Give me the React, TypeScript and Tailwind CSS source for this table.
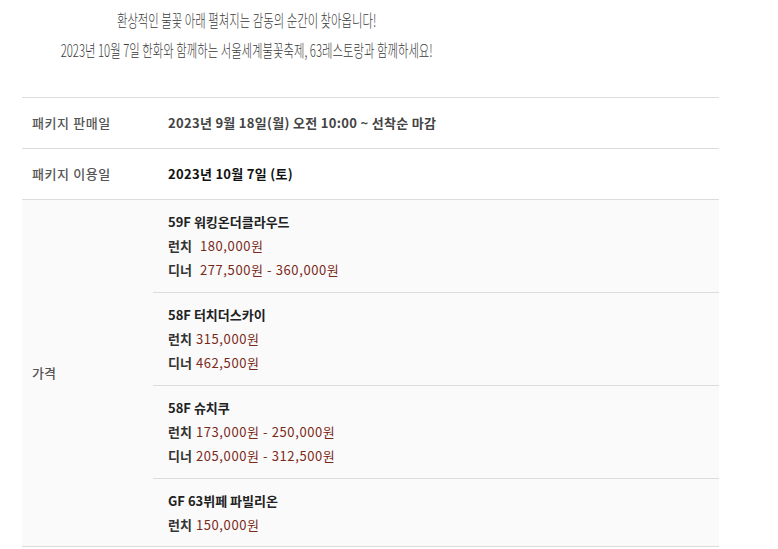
type Price = { label: string; value: string; gap?: boolean };
type Venue = { name: string; prices: Price[] };

const VENUES: Venue[] = [
  {
    name: "59F 워킹온더클라우드",
    prices: [
      { label: "런치", value: "180,000원", gap: true },
      { label: "디너", value: "277,500원 - 360,000원", gap: true },
    ],
  },
  {
    name: "58F 터치더스카이",
    prices: [
      { label: "런치", value: "315,000원" },
      { label: "디너", value: "462,500원" },
    ],
  },
  {
    name: "58F 슈치쿠",
    prices: [
      { label: "런치", value: "173,000원 - 250,000원" },
      { label: "디너", value: "205,000원 - 312,500원" },
    ],
  },
  {
    name: "GF 63뷔페 파빌리온",
    prices: [{ label: "런치", value: "150,000원" }],
  },
];

const font = "font-['Noto_Sans_CJK_KR','Noto_Sans',sans-serif]";

export default function App() {
  return (
    <div className={`${font} h-[549px] w-[778px] overflow-hidden bg-white`}>
      {/* intro copy, narrow face in the original so squeeze it horizontally */}
      <div className="flex w-[494px] flex-col items-center pt-[5px] text-[17px] font-light leading-[30px] text-[#3a3a3a]">
        <p className="scale-x-[0.67] whitespace-nowrap">환상적인 불꽃 아래 펼쳐지는 감동의 순간이 찾아옵니다!</p>
        <p className="scale-x-[0.67] whitespace-nowrap">
          2023년 10월 7일 한화와 함께하는 서울세계불꽃축제, 63레스토랑과 함께하세요!
        </p>
      </div>

      <div className="ml-[22px] mt-[32px] w-[697px] border-t border-[#dcdcdc] text-[13px]">
        <div className="flex h-[51px] items-center border-b border-[#dcdcdc]">
          <div className="w-[131px] pl-[10px] font-medium tracking-[0.6px] text-[#555]">패키지 판매일</div>
          <div className="pl-[15px] font-bold tracking-[0.3px] text-[#444]">
            2023년 9월 18일(월) 오전 10:00 ~ 선착순 마감
          </div>
        </div>
        <div className="flex h-[51px] items-center border-b border-[#dcdcdc]">
          <div className="w-[131px] pl-[10px] font-medium tracking-[0.6px] text-[#555]">패키지 이용일</div>
          <div className="pl-[15px] font-bold tracking-[0.3px] text-[#111]">2023년 10월 7일 (토)</div>
        </div>
        <div className="flex border-b border-[#dcdcdc] bg-[#fafafa]">
          <div className="flex w-[131px] items-center pl-[10px] font-medium text-[#555]">가격</div>
          <div className="flex-1">
            {VENUES.map((v, i) => (
              <div
                key={v.name}
                className={`py-[10px] pl-[15px] leading-[24px] ${i > 0 ? "border-t border-[#dcdcdc]" : ""} ${
                  i === VENUES.length - 1 ? "pb-[9px]" : ""
                }`}
              >
                <div className="font-bold text-[#222]">{v.name}</div>
                {v.prices.map((p) => (
                  <div key={p.label} className="flex">
                    <span className={`font-bold text-[#333] ${p.gap ? "mr-[8px]" : "mr-[4px]"}`}>{p.label}</span>
                    <span className="tracking-[0.6px] text-[#7b2a1a]">{p.value}</span>
                  </div>
                ))}
              </div>
            ))}
          </div>
        </div>
      </div>
    </div>
  );
}
